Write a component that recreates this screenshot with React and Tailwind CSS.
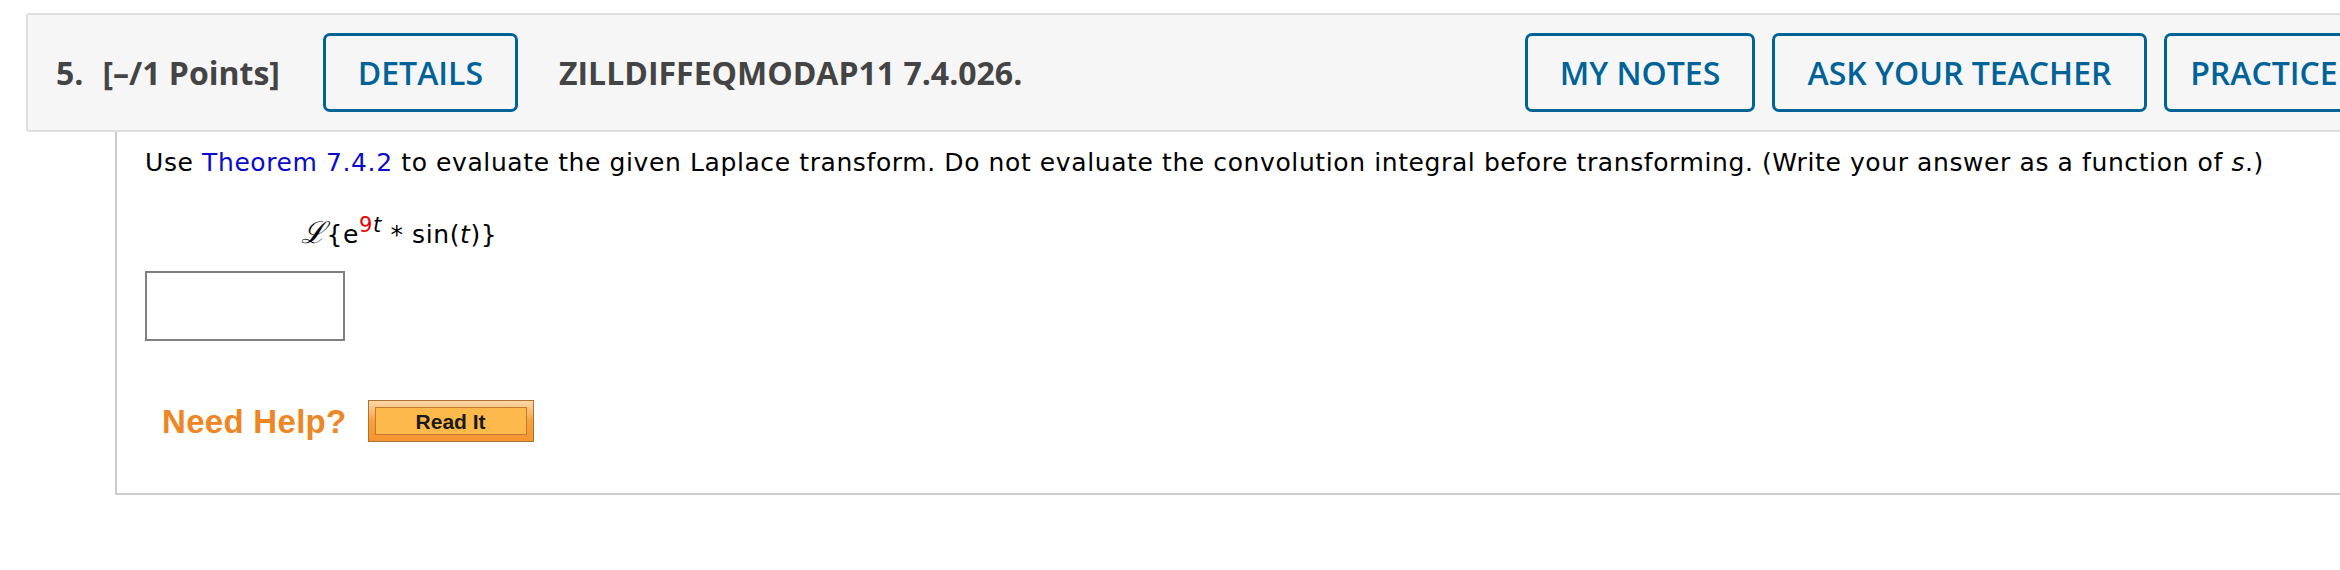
import React from "react";

const HeaderButton = ({ label, width }) => (
  <button
    className={`h-[79px] ${width} shrink-0 rounded-[7px] border-[3px] border-[#006398] bg-[#f6f6f6] text-[32px] font-semibold leading-none text-[#006398]`}
  >
    {label}
  </button>
);

export default function App() {
  return (
    <div className="h-[570px] w-full overflow-hidden bg-white pt-[13px] pl-[26px]">
      {/* question header */}
      <div
        className="flex h-[119px] w-[2520px] items-center rounded-[3px] border-2 border-[#dedede] bg-[#f6f6f6] pl-[28px] pr-[20px] text-[#444]"
        style={{ fontFamily: '"Open Sans", sans-serif' }}
      >
        <span className="text-[32px] font-bold leading-none">5.</span>
        <span className="ml-[19px] text-[32px] font-bold leading-none">[–/1 Points]</span>
        <div className="ml-[43px]">
          <HeaderButton label="DETAILS" width="w-[195px]" />
        </div>
        <span className="ml-[41px] text-[32px] font-bold leading-none">ZILLDIFFEQMODAP11 7.4.026.</span>
        <div className="ml-auto flex items-center gap-[17px]">
          <HeaderButton label="MY NOTES" width="w-[230px]" />
          <HeaderButton label="ASK YOUR TEACHER" width="w-[375px]" />
          <HeaderButton label="PRACTICE ANOTHER" width="w-[360px]" />
        </div>
      </div>

      {/* question body */}
      <div
        className="ml-[89px] w-[2500px] border-b-2 border-l-2 border-[#cccccc] pt-[17px] pl-[28px] pb-[51px] text-black"
        style={{ fontFamily: '"DejaVu Sans", Verdana, sans-serif' }}
      >
        <p className="text-[25px] leading-[28px] tracking-[0.6px]">
          Use <span className="text-[#0a0acc]">Theorem 7.4.2</span> to evaluate the given Laplace transform. Do not
          evaluate the convolution integral before transforming. (Write your answer as a function of <i>s</i>.)
        </p>

        <div className="mt-[38px] ml-[156px] h-[28px] whitespace-pre text-[25px] leading-[28px] tracking-[0.6px]">
          <span className="text-[30px] italic" style={{ fontFamily: '"DejaVu Serif", serif' }}>ℒ</span>
          <span>{"{e"}</span>
          <span className="align-[11px] text-[21px] leading-none">
            <span className="text-[#ee0000]">9</span>
            <i>t</i>
          </span>
          <span>{" * sin("}</span>
          <i>t</i>
          <span>{")}"}</span>
        </div>

        <div className="mt-[28px] h-[70px] w-[200px] border-2 border-[#808080] bg-white" />

        <div className="mt-[59px] ml-[17px] flex items-center gap-[21px]" style={{ fontFamily: '"Liberation Sans", Arial, sans-serif' }}>
          <span className="text-[33px] font-bold leading-none tracking-[0.3px] text-[#ef8624]">Need Help?</span>
          <button className="h-[42px] w-[166px] border border-[#b0702e] bg-gradient-to-b from-[#fcd9a8] via-[#f7a13a] to-[#f59530] p-[6px]">
            <span className="flex h-full w-full items-center justify-center border border-[#c07a34] bg-[#fdb94b] text-[21px] font-bold leading-none text-[#1a1a1a]">
              Read It
            </span>
          </button>
        </div>
      </div>
    </div>
  );
}
